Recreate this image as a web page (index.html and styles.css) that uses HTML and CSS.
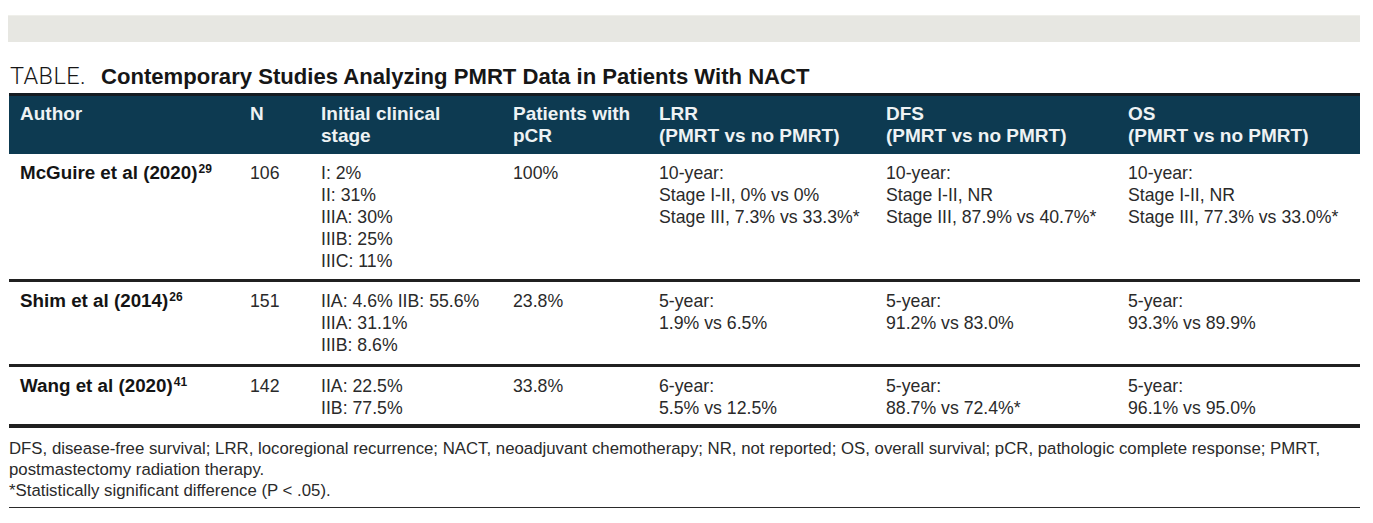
FILE: index.html
```html
<!DOCTYPE html>
<html lang="en">
<head>
<meta charset="utf-8">
<title>TABLE. Contemporary Studies Analyzing PMRT Data in Patients With NACT</title>
<link rel="stylesheet" href="styles.css">
</head>
<body>
<div class="page">
  <div class="band"></div>
  <h1 class="title"><span class="label">TABLE.</span><span class="name">Contemporary Studies Analyzing PMRT Data in Patients With NACT</span></h1>
  <table class="data">
    <colgroup>
      <col class="c-author">
      <col class="c-n">
      <col class="c-stage">
      <col class="c-pcr">
      <col class="c-lrr">
      <col class="c-dfs">
      <col class="c-os">
    </colgroup>
    <thead>
      <tr>
        <th>Author</th>
        <th>N</th>
        <th>Initial clinical<br>stage</th>
        <th>Patients with<br>pCR</th>
        <th>LRR<br>(PMRT vs no PMRT)</th>
        <th>DFS<br>(PMRT vs no PMRT)</th>
        <th>OS<br>(PMRT vs no PMRT)</th>
      </tr>
    </thead>
    <tbody>
      <tr class="row-1">
        <td class="author">McGuire et al (2020)<sup>29</sup></td>
        <td>106</td>
        <td>I: 2%<br>II: 31%<br>IIIA: 30%<br>IIIB: 25%<br>IIIC: 11%</td>
        <td>100%</td>
        <td>10-year:<br>Stage I-II, 0% vs 0%<br>Stage III, 7.3% vs 33.3%*</td>
        <td>10-year:<br>Stage I-II, NR<br>Stage III, 87.9% vs 40.7%*</td>
        <td>10-year:<br>Stage I-II, NR<br>Stage III, 77.3% vs 33.0%*</td>
      </tr>
      <tr class="row-2">
        <td class="author">Shim et al (2014)<sup>26</sup></td>
        <td>151</td>
        <td>IIA: 4.6% IIB: 55.6%<br>IIIA: 31.1%<br>IIIB: 8.6%</td>
        <td>23.8%</td>
        <td>5-year:<br>1.9% vs 6.5%</td>
        <td>5-year:<br>91.2% vs 83.0%</td>
        <td>5-year:<br>93.3% vs 89.9%</td>
      </tr>
      <tr class="row-3">
        <td class="author">Wang et al (2020)<sup>41</sup></td>
        <td>142</td>
        <td>IIA: 22.5%<br>IIB: 77.5%</td>
        <td>33.8%</td>
        <td>6-year:<br>5.5% vs 12.5%</td>
        <td>5-year:<br>88.7% vs 72.4%*</td>
        <td>5-year:<br>96.1% vs 95.0%</td>
      </tr>
    </tbody>
  </table>
  <div class="notes">
    <p>DFS, disease-free survival; LRR, locoregional recurrence; NACT, neoadjuvant chemotherapy; NR, not reported; OS, overall survival; pCR, pathologic complete response; PMRT,<br>postmastectomy radiation therapy.</p>
    <p>*Statistically significant difference (P &lt; .05).</p>
  </div>
</div>
</body>
</html>
```

FILE: styles.css
```css
* {
  box-sizing: border-box;
}

html, body {
  margin: 0;
  padding: 0;
  background: #ffffff;
}

body {
  font-family: "Liberation Sans", Arial, Helvetica, sans-serif;
  color: #262626;
}

.page {
  width: 1373px;
  padding: 15px 13px 0 9px;
}

.band {
  height: 27px;
  margin-left: -1px;
  background: #e7e7e2;
  border-top: 1px solid #efefea;
}

.title {
  margin: 21px 0 3px 1px;
  font-size: 22.1px;
  line-height: 26px;
  font-weight: normal;
  color: #161616;
  white-space: nowrap;
}

.title .label {
  font-family: Roboto, "Liberation Sans", sans-serif;
  font-weight: 300;
  font-size: 23.5px;
  letter-spacing: 0.4px;
  margin-right: 15px;
}

.title .name {
  font-weight: bold;
  letter-spacing: 0;
}

.data {
  width: 1351px;
  border-collapse: collapse;
  table-layout: fixed;
}

.c-author { width: 230px; }
.c-n { width: 71px; }
.c-stage { width: 192px; }
.c-pcr { width: 146px; }
.c-lrr { width: 227px; }
.c-dfs { width: 242px; }
.c-os { width: 243px; }

.data thead tr {
  background: #0d3a51;
  border-top: 3px solid #151c22;
}

.data th {
  text-align: left;
  vertical-align: top;
  font-weight: bold;
  font-size: 19px;
  line-height: 22px;
  color: #eef2f4;
  padding: 7px 2px 7px 11px;
  white-space: nowrap;
}

.data td {
  text-align: left;
  vertical-align: top;
  font-size: 17.7px;
  line-height: 22px;
  color: #2a2a2a;
  padding: 8px 2px 8px 11px;
  white-space: nowrap;
}

.data tbody tr {
  border-bottom: 3px solid #202020;
}

.data tbody tr.row-1 td {
  padding-bottom: 7px;
}

.data tbody tr.row-3 {
  border-bottom-width: 4px;
}

.data tbody tr.row-3 td {
  padding-bottom: 5px;
}

.data td.author {
  font-weight: bold;
  font-size: 18.8px;
  color: #141414;
}

.data sup {
  font-size: 12px;
  line-height: 0;
  vertical-align: 6px;
  margin-left: 1px;
}

.notes {
  width: 1351px;
  padding: 10px 0 6px 0;
  border-bottom: 1.5px solid #2a2a2a;
}

.notes p {
  margin: 0;
  font-size: 16.8px;
  line-height: 21px;
  color: #2a2a2a;
  white-space: nowrap;
}
```
